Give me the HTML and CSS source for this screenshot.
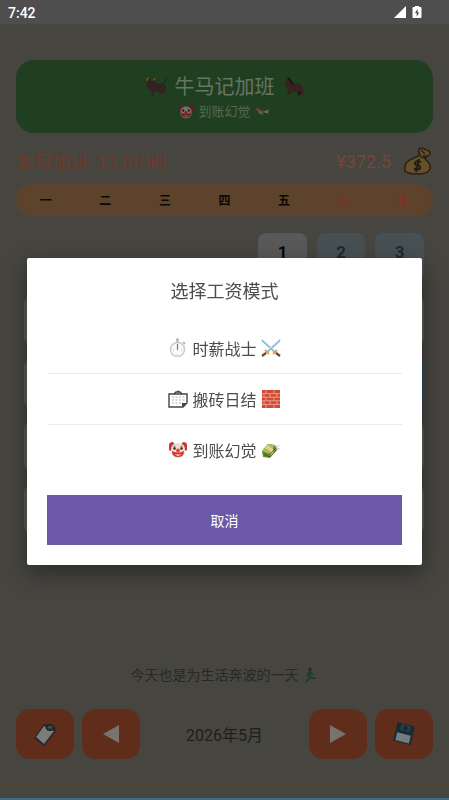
FILE: index.html
```html
<!DOCTYPE html>
<html lang="zh-CN">
<head>
<meta charset="utf-8">
<meta name="viewport" content="width=device-width, initial-scale=1">
<title>牛马记加班</title>
<link rel="stylesheet" href="styles.css">
</head>
<body>
<svg class="defs" aria-hidden="true">
  <symbol id="clown" viewBox="0 0 20 20">
    <path d="M1 5q0-3 4-3l2 3-4 6-2-1z" fill="#cf3430"/><path d="M19 5q0-3-4-3l-2 3 4 6 2-1z" fill="#cf3430"/>
    <path d="M3 10q0-7 7-7t7 7q0 8-7 8t-7-8z" fill="#f3ddce"/>
    <path d="M6.500 5.500v3M13.500 5.500v3" stroke="#469bc4" stroke-width="1.500"/>
    <circle cx="6.500" cy="8.500" r="1.200" fill="#302929"/><circle cx="13.500" cy="8.500" r="1.200" fill="#302929"/>
    <path d="M4 11q6 3 12 0 0 6-6 6t-6-6z" fill="#cf3430"/>
    <path d="M6.500 14q3.500 1 7 0-3.500 3.500-7 0z" fill="#fff"/><circle cx="10" cy="10.500" r="1.900" fill="#e0443a"/>
  </symbol>
  <symbol id="cash" viewBox="0 0 20 20">
    <path d="M13 6l7-1-4 2 4 2-7 2z" fill="#bfdde6"/>
    <path d="M1 11l6-7 7 1 2 5-7 8-7-1z" fill="#6d8b35"/>
    <path d="M1 11l6-7 7 1-6 9z" fill="#a3bb59"/>
    <path d="M4 8l5 3 1 5 3-3-1-4-5-4z" fill="#dfd188"/><path d="M2 13l6 2 7-7M3 15l6 2 6-7" stroke="#4d662a" fill="none"/>
  </symbol>
</svg>

<div class="app">
  <div class="statusbar">
    <span>7:42</span>
    <svg class="signals" viewBox="0 0 30 14" aria-hidden="true">
      <path d="M13 0v12H1z" fill="#fff"/>
      <path d="M22 0h4v1h1.500q1 0 1 1v9q0 1-1 1h-7q-1 0-1-1V2q0-1 1-1H22z" fill="#fff"/>
      <path d="M24.500 3l-2.500 4h1.700v3.500l2.500-4h-1.700z" fill="#444"/>
    </svg>
  </div>
  <main class="page">
    <header class="hero">
      <h1>
        <svg viewBox="0 0 22 22" aria-hidden="true">
          <path d="M2 6q0-4 3-3-1 2 1 2 3 0 4-2 2 2 0 4 5 1 8 1 3 1 3 4l-1 5-2 1-1-3-1 3-2 1v-3l-5 0-1 4-2-1v-4L3 13 1 9z" fill="#35211f"/>
          <path d="M2 5q0-3 2-3M8 4q2 0 2-2" stroke="#76501d" fill="none" stroke-width="1.500"/><path d="M18 8q3-2 3-6" stroke="#172414" fill="none"/>
        </svg>
        <span>牛马记加班</span>
        <svg viewBox="0 0 22 22" aria-hidden="true">
          <path d="M1 8l3-4V1l3 3 3 3q6 0 9 3l2 5-1 5-2-3-2 4-2-4-5-2-2 4-2-1-1-6-1-4-3 1z" fill="#38221f"/>
          <path d="M5 2l3 3 2 4" stroke="#20130f" stroke-width="2" fill="none"/><path d="M15 15l1 6 2-5" fill="#111812"/>
        </svg>
      </h1>
      <p>
        <svg class="dim" viewBox="0 0 20 20" aria-hidden="true"><use href="#clown"/></svg>
        <span>到账幻觉</span>
        <svg viewBox="0 0 20 20" aria-hidden="true">
          <path d="M1 5l5 1 2 3 3-1-1 4-4 1z" fill="#6d5a43"/><path d="M3 5l6 4" stroke="#6c3023" stroke-width="2"/>
          <path d="M11 9l7-2-2 3 2 2-6-1z" fill="#637363"/><path d="M7 12l3 2 2-2" fill="#47582b"/>
        </svg>
      </p>
    </header>

    <section class="summary">
      <span>本月加班: 13.0小时</span>
      <span class="pay">¥372.5</span>
      <svg viewBox="0 0 28 28" aria-hidden="true">
        <path d="M16 2q4-2 7 1 4 0 4 4-2 3-6 2l2 4q5 4 4 9-2 5-12 5T2 24Q0 15 11 11l6-3q-2-3-1-6z" fill="#66502a" stroke="#2a2015" stroke-width="1.500"/>
        <path d="M17 9q3 3 7 1M18 3l4 4" stroke="#2a2015" stroke-width="1.500" fill="none"/>
        <path d="M18 15q-5-2-6 1 0 2 3 2.500t2 3q-2 2-6 0M16 12l-3 13" stroke="#211b14" stroke-width="2" fill="none"/>
      </svg>
    </section>

    <div class="weekdays">
      <span>一</span><span>二</span><span>三</span><span>四</span><span>五</span><span class="rest">六</span><span class="rest">日</span>
    </div>

    <div class="calendar">
      <button class="day first">1</button><button class="day off">2</button><button class="day off">3</button>
      <i class="day"></i><i class="day"></i><i class="day"></i><i class="day"></i><i class="day"></i><i class="day"></i><i class="day"></i>
      <i class="day"></i><i class="day"></i><i class="day"></i><i class="day"></i><i class="day"></i><i class="day"></i><i class="day today"></i>
      <i class="day"></i><i class="day"></i><i class="day"></i><i class="day"></i><i class="day"></i><i class="day"></i><i class="day"></i>
      <i class="day"></i><i class="day"></i><i class="day"></i><i class="day"></i><i class="day"></i><i class="day"></i><i class="day"></i>
    </div>

    <p class="motto">
      <span>今天也是为生活奔波的一天</span>
      <svg viewBox="0 0 16 16" aria-hidden="true">
        <circle cx="7" cy="2.500" r="1.700" fill="#292c25"/><path d="M5 4l4 1-1 5h5v2H7l-3 3-3 1 4-5 1-3-3 2 1-3z" fill="#203d28"/><path d="M8 6l3 2" stroke="#332c22"/>
      </svg>
    </p>

    <nav class="toolbar">
      <button aria-label="标签">
        <svg viewBox="0 0 24 24" aria-hidden="true">
          <path d="M11 2l11 3 1 4-12 15L1 16z" fill="#222629"/><path d="M11 4l10 5-10 13-8-7z" fill="#7b7d7d"/>
          <ellipse cx="17" cy="5.500" rx="4" ry="3" fill="#27383a" stroke="#17191a"/><path d="M15 6q2-2 4-1" stroke="#536365" fill="none"/>
        </svg>
      </button>
      <button aria-label="上个月"><svg viewBox="0 0 24 24" aria-hidden="true"><path d="M20 3v18L4 12z" fill="#797370"/></svg></button>
      <span class="month">2026年5月</span>
      <button aria-label="下个月"><svg viewBox="0 0 24 24" aria-hidden="true"><path d="M4 3v18l16-9z" fill="#797370"/></svg></button>
      <button aria-label="保存">
        <svg viewBox="0 0 24 24" aria-hidden="true">
          <g transform="rotate(14 12 12)"><path d="M3 2h17l1 2v17H3z" fill="#172a36"/><path d="M7 3h10v6H7z" fill="#253e49"/><circle cx="12" cy="6" r="2" fill="#14242d"/><path d="M5 12h14v8H5z" fill="#747e80"/></g>
        </svg>
      </button>
    </nav>
    <div class="edge"></div>
  </main>
</div>

<div class="scrim">
  <div class="dialog" role="dialog" aria-modal="true" aria-labelledby="dialog-title">
    <h2 id="dialog-title">选择工资模式</h2>
    <div class="options">
      <button>
        <svg viewBox="0 0 20 20" aria-hidden="true">
          <circle cx="9.500" cy="11.500" r="7" fill="#fafafa" stroke="#cbcbcb" stroke-width="1.500"/><path d="M8 1.500h3M9.500 2v3M15 4l2 2" stroke="#b8b8b8" stroke-width="2"/><path d="M9.500 12V6" stroke="#777" stroke-width="1.200"/><path d="M9.500 16v1M5 12h1M13 12h1" stroke="#bbb"/>
        </svg>
        <span>时薪战士</span>
        <svg viewBox="0 0 20 20" aria-hidden="true">
          <path d="M1 2l14 13M19 2L5 15" stroke="#79b7d2" stroke-width="2"/><path d="M2 2l12 11M18 2L6 13" stroke="#d6edf5" stroke-width="1"/>
          <path d="M12 16l4-4M8 16l-4-4" stroke="#dfa33c" stroke-width="1.800"/><path d="M15 15l4 3M5 15l-4 3" stroke="#70452a" stroke-width="2.200"/>
        </svg>
      </button>
      <button>
        <svg viewBox="0 0 20 20" aria-hidden="true">
          <path d="M1 5h18v9l-4 4H1z" fill="#fff" stroke="#444" stroke-width="1.400"/><path d="M6 5l2-2h4l2 2" stroke="#444" stroke-width="1.400" fill="none"/><circle cx="10" cy="2.500" r="1" fill="#444"/><path d="M4 8h13M4 11h13M4 14h9" stroke="#b0b0b0" stroke-dasharray="2 1.500"/><path d="M14 18v-4h5z" fill="#444"/>
        </svg>
        <span>搬砖日结</span>
        <svg viewBox="0 0 20 20" aria-hidden="true">
          <path d="M1 1h18v18H1z" fill="#d04a31"/><path d="M1 4.600h18M1 8.200h18M1 11.800h18M1 15.400h18M5 1v3.600M13 1v3.600M3 4.600v3.600M9 4.600v3.600M16 4.600v3.600M5 8.200v3.600M13 8.200v3.600M3 11.800v3.600M9 11.800v3.600M16 11.800v3.600M5 15.400V19M13 15.400V19" stroke="#efb3a2" stroke-width=".8"/>
        </svg>
      </button>
      <button>
        <svg viewBox="0 0 20 20" aria-hidden="true"><use href="#clown"/></svg>
        <span>到账幻觉</span>
        <svg viewBox="0 0 20 20" aria-hidden="true"><use href="#cash"/></svg>
      </button>
    </div>
    <button class="cancel">取消</button>
  </div>
</div>
</body>
</html>
```
FILE: styles.css
```css
* { box-sizing: border-box; }

body {
  margin: 0;
  background: #464540;
  color: #1f1e1c;
  font-family: Roboto, "Noto Sans CJK SC", sans-serif;
}

button {
  border: 0;
  padding: 0;
  font: inherit;
  color: inherit;
  background: none;
}

h1, h2, p { margin: 0; font-weight: 400; }

svg { display: block; flex: none; }
.defs { position: absolute; width: 0; height: 0; }

.app {
  min-height: 100vh;
  display: flex;
  flex-direction: column;
}

.statusbar {
  height: 24px;
  padding: 2px 26px 0 8px;
  display: flex;
  align-items: center;
  justify-content: space-between;
  background: #4f4e4e;
  color: #fff;
  font-size: 14px;
  font-weight: 500;
}
.signals { width: 30px; height: 14px; }

.page {
  flex: 1;
  display: flex;
  flex-direction: column;
  padding: 36px 16px 0;
}

.hero {
  padding: 13px 16px 11px;
  border-radius: 18px;
  background: #203e20;
  color: #667564;
}
.hero h1, .hero p {
  display: flex;
  align-items: center;
  justify-content: center;
}
.hero h1 { gap: 8px; font-size: 20px; line-height: 28px; }
.hero h1 svg { width: 22px; height: 22px; }
.hero p { gap: 4px; font-size: 13px; line-height: 21px; color: #576855; }
.hero p svg { width: 16px; height: 16px; }
.dim { filter: brightness(.5); }

.summary {
  display: flex;
  align-items: center;
  height: 28px;
  margin: 14px 0 9px;
  font-size: 18px;
  color: #703a29;
}
.pay { margin-left: auto; margin-right: 12px; color: #784638; }
.summary svg { width: 28px; height: 28px; margin-right: 2px; }

.weekdays {
  display: grid;
  grid-template-columns: repeat(7, 1fr);
  padding-top: 2px;
  border-radius: 16px;
  background: #5e432c;
  color: #0b0807;
  font-size: 12px;
  font-weight: 700;
  line-height: 30px;
  text-align: center;
}
.rest { color: #823025; }

.calendar {
  display: grid;
  grid-template-columns: repeat(7, 1fr);
  gap: 14px 10px;
  padding: 17px 9px 0 8px;
}
.day {
  height: 49px;
  padding-bottom: 12px;
  border-radius: 8px;
  background: #5a5959;
  color: #080808;
  font-size: 17px;
  font-weight: 700;
}
.first { grid-column-start: 5; }
.off { background: #475154; color: #23292b; }
.today { background: #24535a; }

.motto {
  display: flex;
  align-items: center;
  justify-content: center;
  gap: 4px;
  margin-top: auto;
  font-size: 14px;
  line-height: 24px;
  color: #292825;
}
.motto svg { width: 16px; height: 16px; }

.toolbar {
  display: flex;
  align-items: center;
  gap: 8px;
  margin: 22px 0 27px;
}
.toolbar button {
  width: 58px;
  height: 50px;
  display: grid;
  place-items: center;
  border-radius: 14px;
  background: #602d1b;
}
.toolbar svg { width: 24px; height: 24px; }
.month { flex: 1; text-align: center; font-size: 16px; }

.edge {
  height: 14px;
  margin: 0 -16px;
  border-top: 1px solid #514535;
  border-bottom: 2px solid #416985;
}

.scrim {
  position: fixed;
  inset: 0;
  display: grid;
  place-items: center;
  padding: 23px 27px 0;
}
.dialog {
  width: 100%;
  padding: 17px 20px 20px;
  border-radius: 2px;
  background: #fff;
  color: #4c4c4c;
  box-shadow: 0 8px 24px rgba(0, 0, 0, .4);
}
.dialog h2 {
  margin-bottom: 14px;
  font-size: 18px;
  line-height: 34px;
  text-align: center;
}
.options button {
  width: 100%;
  height: 51px;
  display: flex;
  align-items: center;
  justify-content: center;
  gap: 4px;
  font-size: 16px;
  border-bottom: 1px solid #ebebeb;
}
.options button:last-child { border-bottom-color: transparent; }
.options svg { width: 20px; height: 20px; }
.cancel {
  width: 100%;
  height: 50px;
  margin-top: 19px;
  background: #6b58a8;
  color: #fff;
  font-size: 14px;
}
```
